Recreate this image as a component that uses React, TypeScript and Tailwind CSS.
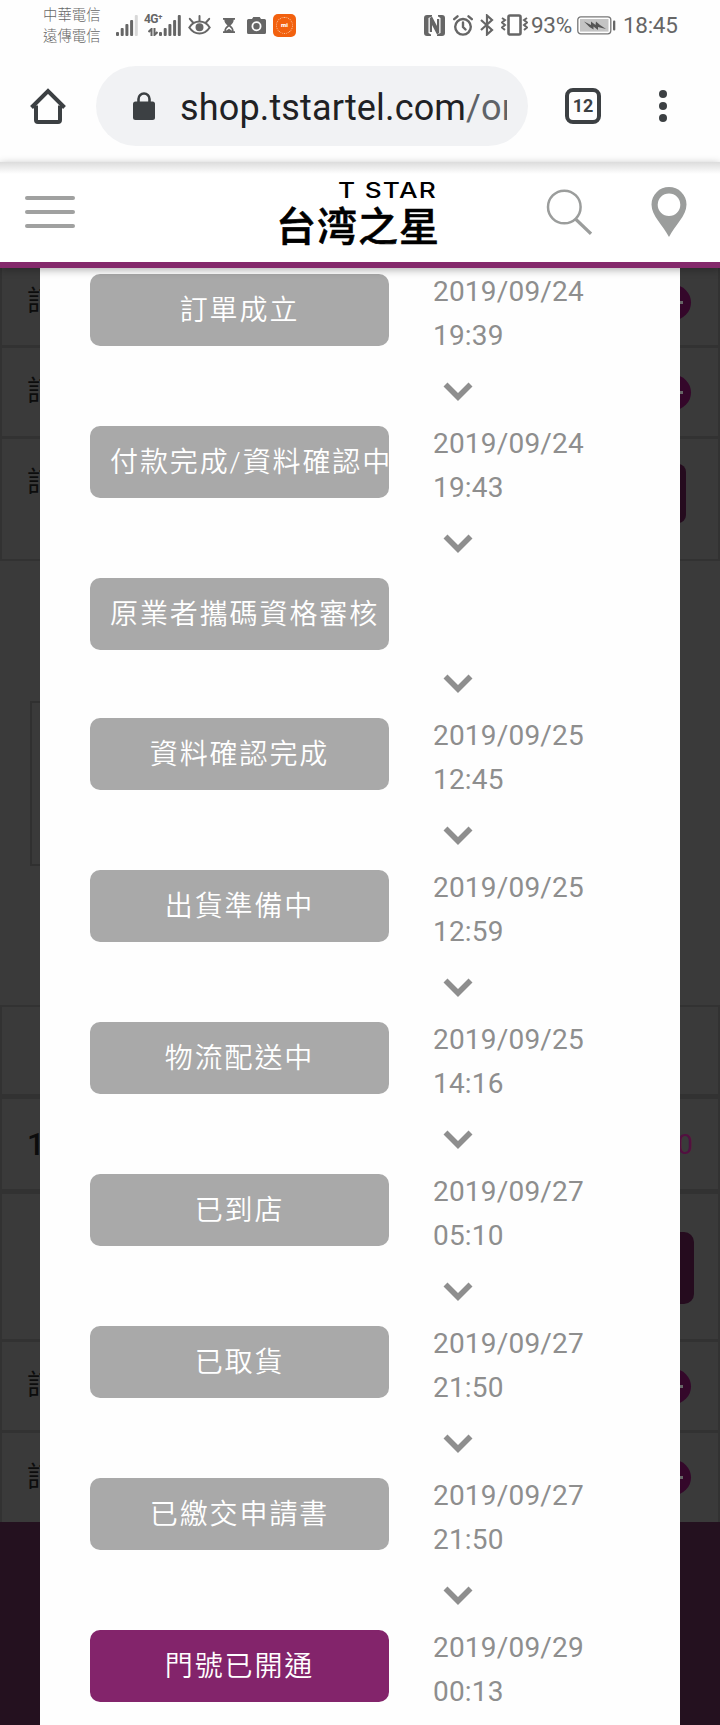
import clsx from "clsx";

type Step = { label: string; date?: string; time?: string; active?: boolean };

const steps: Step[] = [
  { label: "訂單成立", date: "2019/09/24", time: "19:39" },
  { label: "付款完成/資料確認中", date: "2019/09/24", time: "19:43" },
  { label: "原業者攜碼資格審核" },
  { label: "資料確認完成", date: "2019/09/25", time: "12:45" },
  { label: "出貨準備中", date: "2019/09/25", time: "12:59" },
  { label: "物流配送中", date: "2019/09/25", time: "14:16" },
  { label: "已到店", date: "2019/09/27", time: "05:10" },
  { label: "已取貨", date: "2019/09/27", time: "21:50" },
  { label: "已繳交申請書", date: "2019/09/27", time: "21:50" },
  { label: "門號已開通", date: "2019/09/29", time: "00:13", active: true },
];

const Signal = ({ weak }: { weak?: boolean }) => (
  <svg width="22" height="21" viewBox="0 0 22 21" fill="#666" className="shrink-0">
    <rect x="0" y="17" width="3" height="4" rx="1" />
    <rect x="4.7" y="13" width="3" height="8" rx="1" />
    <rect x="9.4" y="9" width="3" height="12" rx="1" />
    <rect x="14.1" y="5" width="3" height="16" rx="1" />
    <rect x="18.8" y="0" width="3" height="21" rx="1" fill={weak ? "#d8d8d8" : "#666"} />
  </svg>
);

const StatusBar = () => (
  <div className="flex h-[50px] items-center text-[#666]">
    <div className="ml-[43px] mt-[2px] w-[60px] text-[14.4px] font-light leading-[21px] whitespace-nowrap">
      <div>中華電信</div>
      <div>遠傳電信</div>
    </div>
    <div className="ml-[13px] flex">
      <Signal weak />
    </div>
    <div className="ml-[6px] flex w-[15px] flex-col">
      <span className="text-[12px] font-bold leading-[11px] tracking-tighter whitespace-nowrap">4G⁺</span>
      <svg width="10" height="8" viewBox="0 0 10 8" className="ml-1 mt-[3px]" fill="none" stroke="#666" strokeWidth="2">
        <path d="M3.5 8V1L.5 4M6.5 0v7l3-3" />
      </svg>
    </div>
    <Signal />
    {/* eye comfort */}
    <svg width="23" height="20" viewBox="0 0 23 20" className="ml-[7px]" fill="none" stroke="#666" strokeWidth="2" strokeLinecap="round">
      <path d="M1.3 12.5C4 8.5 7.5 6.6 11.5 6.6s7.5 1.9 10.2 5.9c-2.7 4-6.2 6-10.2 6s-7.5-2-10.2-6Z" />
      <circle cx="11.5" cy="12.3" r="3" fill="#666" />
      <path d="M11.5 5.5V1M5 7.5 1.8 3.8M18 7.5l3.2-3.7" />
    </svg>
    <svg width="12" height="15" viewBox="0 0 12 15" className="ml-[12px]" fill="#666">
      <path d="M0 0h12v1.8h-1.3c0 2.7-1.5 4.3-3.2 5.7 1.7 1.4 3.2 3 3.2 5.7H12V15H0v-1.8h1.3c0-2.7 1.5-4.3 3.2-5.7C2.8 6.1 1.3 4.5 1.3 1.8H0Z" />
      <path d="M6 8.5c-1.5 1.2-2.8 2.2-3 4.2L6 10.800l3 1.900c-.2-2-1.500-3-3-4.200Z" fill="#fff" />
    </svg>
    <svg width="19" height="17" viewBox="0 0 19 17" className="ml-[12px]" fill="#666">
      <path fillRule="evenodd" d="M1.500 2H5l1.300-2h6.400L14 2h3.500A1.500 1.500 0 0 1 19 3.500v12a1.500 1.500 0 0 1-1.500 1.500h-16A1.500 1.500 0 0 1 0 15.500v-12A1.500 1.500 0 0 1 1.500 2Zm8 2.200a5 5 0 1 0 0 10 5 5 0 0 0 0-10Zm0 1.800a3.200 3.200 0 1 1 0 6.400 3.200 3.200 0 0 1 0-6.400Z" />
    </svg>
    <div className="ml-[7px] flex size-[23px] items-center justify-center rounded-[5px] bg-[#f2610f]">
      <div className="flex size-[17px] items-center justify-center rounded-full border border-dotted border-[#fcc9a5] text-[6px] font-black leading-none text-white">
        mi
      </div>
    </div>
    <div className="ml-auto flex items-center">
      {/* NFC */}
      <svg width="21" height="21" viewBox="0 0 21 21" fill="#666">
        <path d="M3 0h5v1.5L4.500 3v15L7 19.500V21H3a3 3 0 0 1-3-3V3a3 3 0 0 1 3-3ZM14 0h4a3 3 0 0 1 3 3v15a3 3 0 0 1-3 3h-5v-1.500l3.500-1.500V3L14 1.500Z" />
        <path d="M5.800 3 8 1.500l5 9.500V4h2.200v14L13 19.500 8 10v7H5.800Z" />
      </svg>
      <svg width="20" height="21" viewBox="0 0 20 21" className="ml-[8px]" fill="none" stroke="#666" strokeWidth="2.4" strokeLinecap="round">
        <circle cx="10" cy="11.8" r="7.800" />
        <path d="M10 7.500v4.500l2.500 2.500M1.200 4.200 4.500 1.300M18.800 4.200l-3.300-2.900" />
      </svg>
      <svg width="14" height="22" viewBox="0 0 14 22" className="ml-[7px]" fill="none" stroke="#666" strokeWidth="2.2">
        <path d="M1 6l11 10-5 4.500v-19L12 6 1 16" />
      </svg>
      <svg width="27" height="22" viewBox="0 0 27 22" className="ml-[7px]" fill="none" stroke="#666" strokeWidth="2">
        <rect x="7.5" y="1.5" width="12" height="19" rx="1.5" strokeWidth="2.6" />
        <path d="M1 4l3 2-3 2.500 3 2.500-3 2.500 3 2.500M26 4l-3 2 3 2.500-3 2.500 3 2.500-3 2.500" />
      </svg>
      <span className="ml-[3px] w-[42px] pt-[1px] text-[22.5px] leading-none tracking-[-0.3px]">93%</span>
      <svg width="39" height="19" viewBox="0 0 39 19" className="ml-[4px]">
        <rect x=".8" y=".8" width="33" height="17" rx="3" fill="#fff" stroke="#777" strokeWidth="1.3" />
        <rect x="3" y="3" width="28.5" height="12.6" fill="#c4c4c4" />
        <path d="M7 5.500l7 3.500 0-3.500 4.500 3.500.5-3.500 4 3.500 6 4-8-2v3l-4.500-3.500v3L12.500 11Z" fill="#555" />
        <rect x="36" y="4.5" width="2.3" height="10" rx="1" fill="#666" />
      </svg>
      <span className="ml-[7px] mr-[42px] w-[55px] pt-[1px] text-[22.5px] leading-none tracking-[-0.3px]">18:45</span>
    </div>
  </div>
);

const BrowserBar = () => (
  <div className="flex h-[112px] items-center text-[#3c4043]">
    <svg width="36" height="37" viewBox="0 0 36 37" className="ml-[30px] shrink-0" fill="none" stroke="#3c4043" strokeWidth="4">
      <path d="M1.500 19.500 18 3l16.500 16.500" />
      <path d="M6 17.500V32a2 2 0 0 0 2 2h20a2 2 0 0 0 2-2V17.500" />
    </svg>
    <div className="ml-[30px] flex h-20 w-[432px] shrink-0 items-center rounded-full bg-[#f1f2f4]">
      <svg width="22" height="28" viewBox="0 0 22 28" className="ml-[37px] shrink-0">
        <rect y="9.5" width="22" height="18.5" rx="2.5" fill="#3c4043" />
        <path d="M5.500 10.500V7a5.500 5.500 0 0 1 11 0v3.500" fill="none" stroke="#3c4043" strokeWidth="2.6" />
      </svg>
      <div className="ml-[25px] w-[327px] overflow-hidden pt-[4px] text-[36px] leading-[44px] tracking-[0.15px] whitespace-nowrap text-[#202124]">
        shop.tstartel.com<span className="text-[#5f6368]">/order</span>
      </div>
    </div>
    <div className="ml-[37px] flex size-9 shrink-0 items-center justify-center rounded-[8px] border-4 border-[#3c4043] text-[18px] font-bold leading-none">
      12
    </div>
    <div className="ml-[58px] flex flex-col gap-1">
      <i className="size-2 rounded-full bg-[#3c4043]" />
      <i className="size-2 rounded-full bg-[#3c4043]" />
      <i className="size-2 rounded-full bg-[#3c4043]" />
    </div>
  </div>
);

const SiteHeader = () => (
  <header className="relative z-10 flex h-[106px] items-start border-b-[6px] border-[#84296b] bg-linear-to-b from-[#dcdcdc] from-0% via-white via-12% to-white shadow-[0_2px_8px_rgba(0,0,0,0.3)]">
    <div className="ml-[25px] mt-[34px] flex w-[50px] flex-col gap-[10px]">
      <i className="h-1 rounded-full bg-[#a0a1a0]" />
      <i className="h-1 rounded-full bg-[#a0a1a0]" />
      <i className="h-1 rounded-full bg-[#a0a1a0]" />
    </div>
    <div className="ml-[201px] mt-[17px] flex w-[165px] flex-col text-black">
      <span className="ml-[62px] origin-left scale-x-[1.25] font-['Inter'] text-[21px] font-medium leading-6 tracking-[1px] whitespace-nowrap">T STAR</span>
      <span className="mt-[3px] text-[40px] font-medium leading-[44px] tracking-[1px] whitespace-nowrap [-webkit-text-stroke:0.6px_black]">台湾之星</span>
    </div>
    <svg width="46" height="48" viewBox="0 0 46 48" className="ml-[105px] mt-[27px]" fill="none" stroke="#9b9d9c" strokeWidth="2.5">
      <circle cx="18.3" cy="18" r="16.3" />
      <path d="M29.500 30 45 44.800" strokeWidth="3.2" />
    </svg>
    <svg width="36" height="50" viewBox="0 0 36 50" className="ml-[59px] mt-[25px]" fill="#9b9d9c">
      <path fillRule="evenodd" d="M18 0a17.500 17.500 0 0 1 17.500 17.500C35.500 29 24 38 18 50 12 38 .5 29 .5 17.500A17.500 17.500 0 0 1 18 0Zm0 6.500a11.300 11.300 0 1 0 0 22.600 11.300 11.300 0 0 0 0-22.600Z" />
    </svg>
  </header>
);

const Minus = () => (
  <i className="mr-[27px] flex size-[35px] items-center justify-center rounded-full bg-[#34072a]">
    <i className="h-[3px] w-[18px] bg-[#666]" />
  </i>
);

// dimmed order page under the dialog
const OrderPage = () => (
  <div className="flex h-[1457px] flex-col bg-[#3a3a3a] text-[28px] leading-none text-[#0c0c0c]">
    <div className="flex h-[80px] items-center justify-between border-x-2 border-b-3 border-[#323232] pb-[9px] pl-[25px]">
      <span>訂單編號</span>
      <Minus />
    </div>
    <div className="flex h-[91px] items-center justify-between border-x-2 border-b-3 border-[#323232] pl-[25px]">
      <span>訂單日期</span>
      <Minus />
    </div>
    <div className="flex h-[122px] items-start justify-between border-x-2 border-b-2 border-[#323232] pl-[25px] pt-[25px]">
      <span className="pt-[5px]">訂單狀態</span>
      <i className="mr-8 h-[59px] w-40 rounded-[8px] bg-[#250b1e]" />
    </div>
    <div className="ml-[30px] mt-[140px] h-[165px] w-[620px] border-2 border-[#303030]" />
    <div className="mt-[139px] h-[94px] border-2 border-b-[5px] border-[#323232]" />
    <div className="flex h-[95px] items-center justify-between border-x-2 border-b-[5px] border-[#323232] pl-[25px] pr-[25px]">
      <span className="text-[31px] font-medium">1</span>
      <span className="pt-[2px] text-[#521040]">0</span>
    </div>
    <div className="flex h-[148px] items-start justify-end border-x-2 border-b-3 border-[#323232] pt-[38px]">
      <i className="mr-6 h-[72px] w-40 rounded-[10px] bg-[#250b1e]" />
    </div>
    <div className="flex h-[91px] items-center justify-between border-x-2 border-b-3 border-[#323232] pl-[25px]">
      <span>訂購人</span>
      <Minus />
    </div>
    <div className="flex h-[89px] items-center justify-between border-x-2 border-[#323232] pl-[25px]">
      <span>訂單明細</span>
      <Minus />
    </div>
    <div className="flex-1 bg-[#24111f]" />
  </div>
);

const StepRow = ({ step, last }: { step: Step; last: boolean }) => (
  <li className="pb-5">
    <div className="flex">
      <div
        className={clsx(
          "mt-1 flex h-[72px] w-[299px] shrink-0 items-center overflow-hidden rounded-[10px] px-5 pt-[2px] text-[28px] font-[350] tracking-[1.9px] whitespace-nowrap text-white",
          step.active ? "bg-[#83246b]" : "bg-[#a9a9a9]",
        )}
      >
        <span className="mx-auto">{step.label}</span>
      </div>
      {step.date && (
        <div className="ml-[44px] text-[28px] leading-[44px] tracking-[0.2px] text-[#8e8e8e]">
          <div>{step.date}</div>
          <div>{step.time}</div>
        </div>
      )}
    </div>
    {!last && (
      <svg width="30" height="20" viewBox="0 0 30 20" className="ml-[353px] mt-[24px] block" fill="none" stroke="#8e8e8e" strokeWidth="5.6">
        <path d="M2.500 2.500 15 15 27.500 2.500" />
      </svg>
    )}
  </li>
);

const App = () => {
  return (
    <div className="h-[1725px] w-[720px] overflow-hidden bg-[#fefefe] font-[Roboto,'Noto_Sans_CJK_TC',sans-serif]">
      <StatusBar />
      <BrowserBar />
      <SiteHeader />
      <main className="relative">
        <OrderPage />
        <ul className="absolute inset-y-0 left-10 w-[640px] overflow-hidden bg-[#fefefe] pl-[50px] pt-[2px]">
          {steps.map((step, i) => (
            <StepRow key={step.label} step={step} last={i === steps.length - 1} />
          ))}
        </ul>
      </main>
    </div>
  );
};

export default App;
